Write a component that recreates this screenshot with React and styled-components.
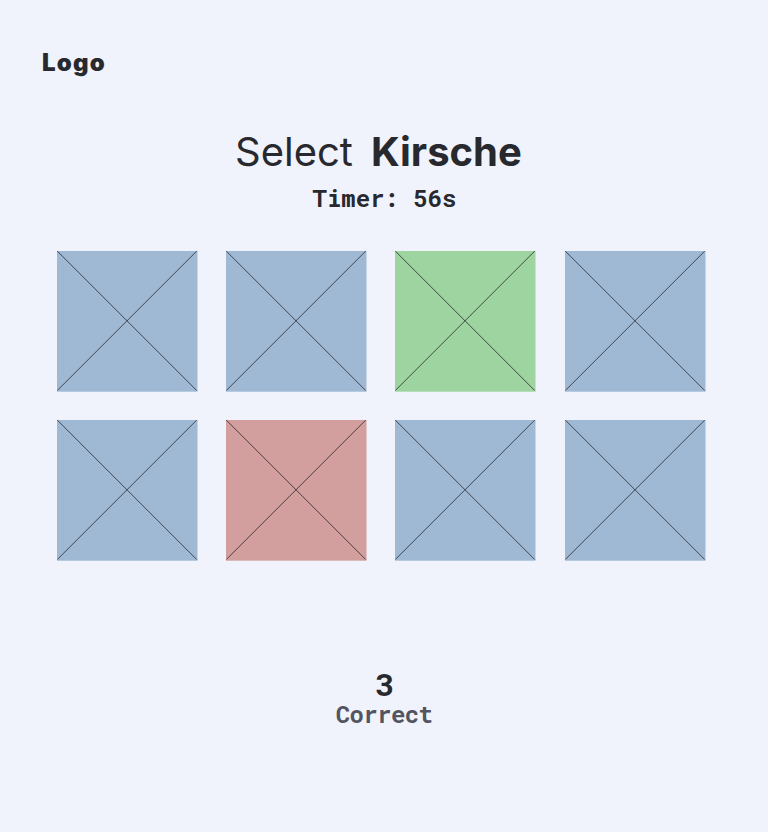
import React from "react";
import styled, { createGlobalStyle } from "styled-components";

const GlobalStyle = createGlobalStyle`
  * { box-sizing: border-box; }
  body { margin: 0; background: #f0f3fb; }
`;
const Page = styled.main`
  width: 768px;
  height: 832px;
  background: #f0f3fb;
  color: #28292e;
  font-family: Inter, sans-serif;
  display: flex;
  flex-direction: column;
`;
const Logo = styled.header`
  padding: 48px 0 0 42px;
  height: 127px;
  font: 900 24px/30px Inter, sans-serif;
  letter-spacing: 1.2px;
`;
const Prompt = styled.h1`
  margin: 0;
  height: 50px;
  padding-left: 235px;
  display: flex;
  gap: 18px;
  font: 400 40px/50px Inter, sans-serif;
  white-space: nowrap;
`;
const Target = styled.strong`
  font-weight: 700;
`;
const Timer = styled.div`
  height: 74px;
  padding: 6px 0 0 1px;
  text-align: center;
  font: 700 24px/30px "Roboto Mono", "DejaVu Sans Mono", monospace;
`;
const Grid = styled.section`
  display: grid;
  grid-template-columns: repeat(4, 141px);
  grid-auto-rows: 141px;
  gap: 28.2px;
  padding-left: 57px;
`;
const fills = { idle: "#9fb9d5", right: "#9ed49f", wrong: "#d39e9e" };
const Tile = styled.svg`
  display: block;
  width: 141px;
  height: 141px;
  color: ${(p) => fills[p.$state]};
`;
const Score = styled.footer`
  margin-top: 104px;
  display: flex;
  flex-direction: column;
  align-items: center;
`;
const Count = styled.div`
  padding-left: 1px;
  font: 700 32px/38px "Roboto Mono", Roboto, sans-serif;
`;
const Caption = styled.div`
  color: #53545f;
  font: 700 24px/22px "Roboto Mono", "DejaVu Sans Mono", monospace;
  letter-spacing: -0.6px;
`;
const tiles = ["idle", "idle", "right", "idle", "idle", "wrong", "idle", "idle"];

export default function App() {
  return (
    <Page>
      <GlobalStyle />
      <Logo>Logo</Logo>
      <Prompt><span>Select</span><Target>Kirsche</Target></Prompt>
      <Timer>Timer: 56s</Timer>
      <Grid>
        {tiles.map((state, i) => (
          <Tile key={i} $state={state} viewBox="0 0 141 141">
            <rect width="140.5" height="140.7" fill="currentColor" />
            <path d="M0.3 0.1L139.7 139.5M0.3 139.5L139.7 0.1" stroke="#28292e" strokeWidth="0.8" />
          </Tile>
        ))}
      </Grid>
      <Score><Count>3</Count><Caption>Correct</Caption></Score>
    </Page>
  );
}
